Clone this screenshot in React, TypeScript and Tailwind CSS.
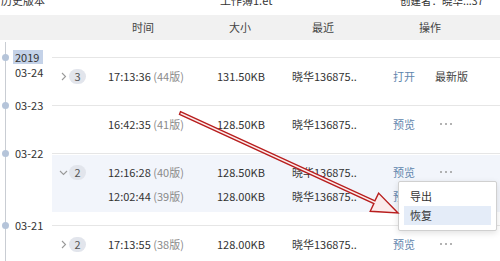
const font = { fontFamily: '"Noto Sans CJK SC", "Noto Sans", sans-serif' };

type Row = { time: string; ver: string; size: string; action: string; extra?: string };
type Group = { date: string; year?: string; badge?: string; open?: boolean; rows: Row[] };

const groups: Group[] = [
  {
    date: "03-24",
    year: "2019",
    badge: "3",
    rows: [{ time: "17:13:36", ver: "(44版)", size: "131.50KB", action: "打开", extra: "最新版" }],
  },
  {
    date: "03-23",
    rows: [{ time: "16:42:35", ver: "(41版)", size: "128.50KB", action: "预览", extra: "···" }],
  },
  {
    date: "03-22",
    badge: "2",
    open: true,
    rows: [
      { time: "12:16:28", ver: "(40版)", size: "128.50KB", action: "预览", extra: "···" },
      { time: "12:02:44", ver: "(39版)", size: "128.00KB", action: "预览" },
    ],
  },
  {
    date: "03-21",
    badge: "2",
    rows: [{ time: "17:13:55", ver: "(38版)", size: "128.00KB", action: "预览", extra: "···" }],
  },
];

function Chevron({ open }: { open?: boolean }) {
  return open ? (
    <svg width="9" height="6" viewBox="0 0 9 6" className="mt-[1px]">
      <path d="M1 1 L4.5 4.5 L8 1" fill="none" stroke="#9a9a9a" strokeWidth="1.1" />
    </svg>
  ) : (
    <svg width="6" height="9" viewBox="0 0 6 9">
      <path d="M1 1 L4.5 4.5 L1 8" fill="none" stroke="#9a9a9a" strokeWidth="1.1" />
    </svg>
  );
}

function Dots() {
  return (
    <div className="flex items-center gap-[3px] pl-[5px]">
      <span className="h-[2px] w-[2px] rounded-full bg-[#9a9a9a]" />
      <span className="h-[2px] w-[2px] rounded-full bg-[#9a9a9a]" />
      <span className="h-[2px] w-[2px] rounded-full bg-[#9a9a9a]" />
    </div>
  );
}

function VersionRow({ row, first, group }: { row: Row; first: boolean; group: Group }) {
  return (
    <div className="flex h-6 items-center text-[11px] text-[#333]">
      <div className="flex w-[56px] items-center pl-[7px]">
        {first && group.badge ? (
          <>
            <span className="flex w-[9px] justify-center">
              <Chevron open={group.open} />
            </span>
            <span className="ml-[1px] flex h-[15px] w-[17px] items-center justify-center rounded-full bg-[#e2e5ec] text-[#555]">
              {group.badge}
            </span>
          </>
        ) : null}
      </div>
      <div className="w-[109px] whitespace-nowrap">
        {row.time} <span className="text-[#8a8a8a]">{row.ver}</span>
      </div>
      <div className="w-[75px]">{row.size}</div>
      <div className="w-[101px]">晓华136875..</div>
      <div className="w-[42px] text-[#5f86ad]">{row.action}</div>
      {row.extra === "···" ? <Dots /> : <div className="text-[#444]">{row.extra}</div>}
    </div>
  );
}

function DateGroup({ group }: { group: Group }) {
  return (
    <div className="flex">
      <div className="relative w-[52px] shrink-0">
        <span className="absolute left-[1.5px] top-[-3.5px] h-[7px] w-[7px] rounded-full bg-[#b5c4d9]" />
        {group.year ? (
          <div className="absolute left-[13px] top-[-7px] text-[11px] leading-[14px] text-[#333]">
            <div className="bg-[#c4d2e8] px-[2px]">{group.year}</div>
            <div className="mt-[1px] pl-[2px]">{group.date}</div>
          </div>
        ) : (
          <div className="absolute left-[15px] top-[-7px] text-[11px] leading-[14px] text-[#333]">
            {group.date}
          </div>
        )}
      </div>
      <div className="flex-1 border-t border-[#e6e6e6] pb-[13px]">
        <div className={`mt-[1px] pt-[5px] pb-[4px] ${group.open ? "bg-[#f2f5fb]" : ""}`}>
          {group.rows.map((r, i) => (
            <VersionRow key={i} row={r} first={i === 0} group={group} />
          ))}
        </div>
      </div>
    </div>
  );
}

export default function App() {
  return (
    <div className="relative h-[261px] w-[500px] overflow-hidden bg-white" style={font}>
      <div className="flex h-[15px] overflow-hidden text-[11px] leading-[11px] text-[#333]">
        <div className="-mt-[5px] w-[220px] pl-[1px]">历史版本</div>
        <div className="-mt-[5px] w-[180px]">工作簿1.et</div>
        <div className="-mt-[5px] text-[10.5px]">创建者：晓华...37</div>
      </div>
      <div className="flex h-[25px] items-center bg-[#f1f1f1] text-[11px] text-[#444]">
        <span className="ml-[132px]">时间</span>
        <span className="ml-[75px]">大小</span>
        <span className="ml-[61px]">最近</span>
        <span className="ml-[85px]">操作</span>
      </div>
      <div className="relative pt-[17px]">
        <div className="absolute bottom-0 left-[4.5px] top-[2px] w-px bg-[#c9cdd3]" />
        {groups.map((g) => (
          <DateGroup key={g.date} group={g} />
        ))}
      </div>

      <div className="absolute left-[398px] top-[181px] w-[99px] rounded-[2px] border border-[#d0d0d0] bg-white p-[5px] text-[11px] text-[#333] shadow-[0_2px_6px_rgba(0,0,0,0.12)]">
        <div className="flex h-[19px] items-center px-[6px]">导出</div>
        <div className="flex h-[19px] items-center bg-[#e4ecf8] px-[6px]">恢复</div>
      </div>

      <svg className="pointer-events-none absolute left-0 top-0" width="500" height="261">
        <polygon
          points="180.5,111.6 374.9,200.8 378.6,193.1 398,213 370.2,211.3 373.9,203.6 179.5,114.4"
          fill="#fbecec"
          stroke="#b81e1e"
          strokeWidth="1.4"
          strokeLinejoin="miter"
        />
      </svg>
    </div>
  );
}
